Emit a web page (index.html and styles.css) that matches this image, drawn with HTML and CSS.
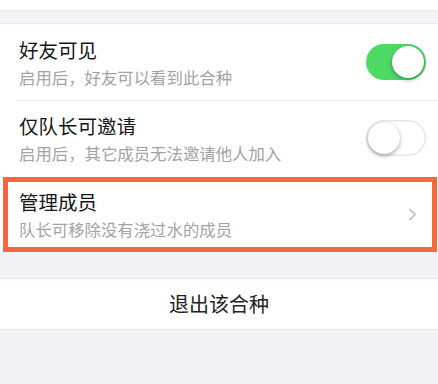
FILE: index.html
```html
<!DOCTYPE html>
<html lang="zh-CN">
<head>
 <meta charset="utf-8">
 <title>合种设置</title>
 <link rel="stylesheet" href="styles.css">
</head>
<body>

 <div class="top-cap"></div>

 <div class="group">
 <div class="cell">
 <div class="cell-text">
 <div class="cell-title">好友可见</div>
 <div class="cell-desc">启用后，好友可以看到此合种</div>
 </div>
 <span class="switch on"></span>
 </div>
 <div class="cell">
 <div class="cell-text">
 <div class="cell-title">仅队长可邀请</div>
 <div class="cell-desc">启用后，其它成员无法邀请他人加入</div>
 </div>
 <span class="switch"></span>
 </div>
 <div class="cell highlight">
 <div class="cell-text">
 <div class="cell-title">管理成员</div>
 <div class="cell-desc">队长可移除没有浇过水的成员</div>
 </div>
 <svg class="chevron" width="9" height="13" viewBox="0 0 9 13">
 <path d="M2 1.5 L7 6.5 L2 11.5" fill="none" stroke="#c4c4c9" stroke-width="1.8" stroke-linecap="round" stroke-linejoin="round"/>
 </svg>
 </div>
 </div>

 <div class="quit-btn">退出该合种</div>

</body>
</html>
```

FILE: styles.css
```css
body {
 margin: 0;
 padding: 0;
 background: #f3f3f7;
 font-family: "Noto Sans CJK SC", "Noto Sans", sans-serif;
 color: #161616;
}

.top-cap {
 height: 10px;
 background: #fff;
 border-bottom: 1px solid #ececf0;
}

.group {
 margin-top: 12px;
 background: #fff;
 border-top: 1px solid #e8e8ec;
}

.cell {
 position: relative;
 display: flex;
 align-items: center;
 height: 76px;
 padding: 0 12px 0 19px;
 box-sizing: border-box;
}

.cell + .cell::before {
 content: "";
 position: absolute;
 top: 0;
 left: 17px;
 right: 0;
 border-top: 1px solid #ebebee;
}

.cell-text {
 flex: 1;
}

.cell-title {
 font-size: 19.5px;
 line-height: 26px;
}

.cell-desc {
 margin-top: 3px;
 font-size: 16.4px;
 line-height: 22px;
 color: #a3a3a3;
}

.switch {
 position: relative;
 width: 60px;
 height: 36px;
 border-radius: 18px;
 background: #fff;
 box-shadow: inset 0 0 0 1.5px #e6e6e6;
}

.switch::after {
 content: "";
 position: absolute;
 top: 2px;
 left: 2px;
 width: 32px;
 height: 32px;
 border-radius: 50%;
 background: #fff;
 box-shadow: 0 2px 4px rgba(0, 0, 0, 0.3), 0 0 1px rgba(0, 0, 0, 0.2);
}

.switch.on {
 background: #4cd964;
 box-shadow: none;
}

.switch.on::after {
 left: 26px;
}

.chevron {
 margin-right: 9px;
}

.highlight::after {
 content: "";
 position: absolute;
 top: 1px;
 left: 3px;
 right: 1px;
 bottom: 0;
 border: 5px solid #f7693a;
}

.highlight::before {
 display: none;
}

.quit-btn {
 margin-top: 26px;
 height: 50px;
 line-height: 50px;
 text-align: center;
 font-size: 20px;
 background: #fff;
 border-top: 1px solid #e8e8ec;
 border-bottom: 1px solid #e8e8ec;
 color: #222;
}
```
